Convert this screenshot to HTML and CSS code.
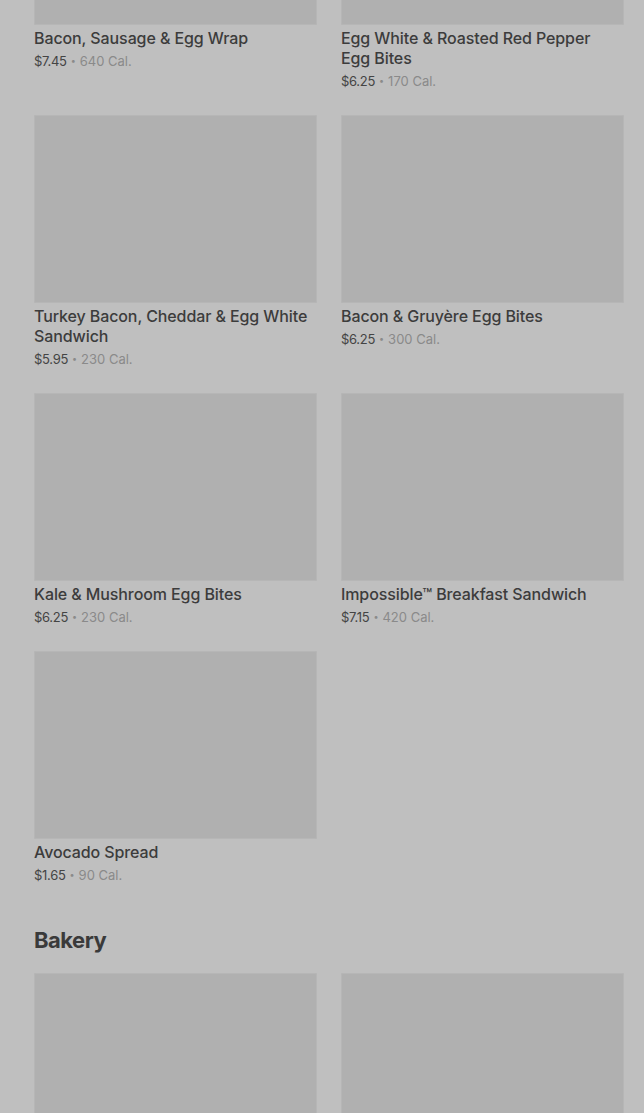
FILE: index.html
```html
<!DOCTYPE html>
<html>
<head>
<meta charset="utf-8">
<link rel="stylesheet" href="styles.css">
</head>
<body>
<div class="page">
  <div class="grid first">
    <div class="card"><div class="thumb"></div><div class="name">Bacon, Sausage &amp; Egg Wrap</div><div class="meta"><span class="price">$7.45</span><span class="dot">•</span><span class="cal">640 Cal.</span></div></div>
    <div class="card"><div class="thumb"></div><div class="name">Egg White &amp; Roasted Red Pepper Egg Bites</div><div class="meta"><span class="price">$6.25</span><span class="dot">•</span><span class="cal">170 Cal.</span></div></div>
    <div class="card"><div class="thumb"></div><div class="name">Turkey Bacon, Cheddar &amp; Egg White Sandwich</div><div class="meta"><span class="price">$5.95</span><span class="dot">•</span><span class="cal">230 Cal.</span></div></div>
    <div class="card"><div class="thumb"></div><div class="name">Bacon &amp; Gruyère Egg Bites</div><div class="meta"><span class="price">$6.25</span><span class="dot">•</span><span class="cal">300 Cal.</span></div></div>
    <div class="card"><div class="thumb"></div><div class="name">Kale &amp; Mushroom Egg Bites</div><div class="meta"><span class="price">$6.25</span><span class="dot">•</span><span class="cal">230 Cal.</span></div></div>
    <div class="card"><div class="thumb"></div><div class="name">Impossible™ Breakfast Sandwich</div><div class="meta"><span class="price">$7.15</span><span class="dot">•</span><span class="cal">420 Cal.</span></div></div>
    <div class="card"><div class="thumb"></div><div class="name">Avocado Spread</div><div class="meta"><span class="price">$1.65</span><span class="dot">•</span><span class="cal">90 Cal.</span></div></div>
  </div>
  <h2 class="section">Bakery</h2>
  <div class="grid">
    <div class="card"><div class="thumb"></div></div>
    <div class="card"><div class="thumb"></div></div>
  </div>
</div>
</body>
</html>
```
FILE: styles.css
```css
html, body {
  margin: 0;
  padding: 0;
  background: #bfbfbf;
  overflow: hidden;
}
.page {
  padding: 0 20px 0 34px;
  font-family: Inter, "Liberation Sans", sans-serif;
}
.grid {
  display: grid;
  grid-template-columns: 283px 283px;
  column-gap: 24px;
  row-gap: 24px;
  align-items: start;
}
.grid.first {
  margin-top: -163px;
}
.thumb {
  height: 188px;
  background: #b0b0b0;
  border-radius: 2px;
  box-shadow: inset 0 0 0 1px #b6b6b6;
}
.name {
  margin-top: 3px;
  padding-right: 6px;
  font-size: 16px;
  line-height: 20px;
  font-weight: 500;
  color: #3c3c3c;
  letter-spacing: -0.1px;
}
.meta {
  margin-top: 3px;
  height: 20px;
  display: flex;
  align-items: center;
  font-size: 13px;
  line-height: 20px;
}
.price {
  color: #444444;
  letter-spacing: -0.3px;
}
.dot {
  color: #8a8a8a;
  font-size: 9px;
  line-height: 20px;
  margin: 0 4px;
}
.cal {
  color: #8a8a8a;
}
.section {
  margin: 41px 0 19px;
  font-size: 22px;
  line-height: 28px;
  font-weight: 700;
  color: #3a3a3a;
  letter-spacing: -0.5px;
}
```
